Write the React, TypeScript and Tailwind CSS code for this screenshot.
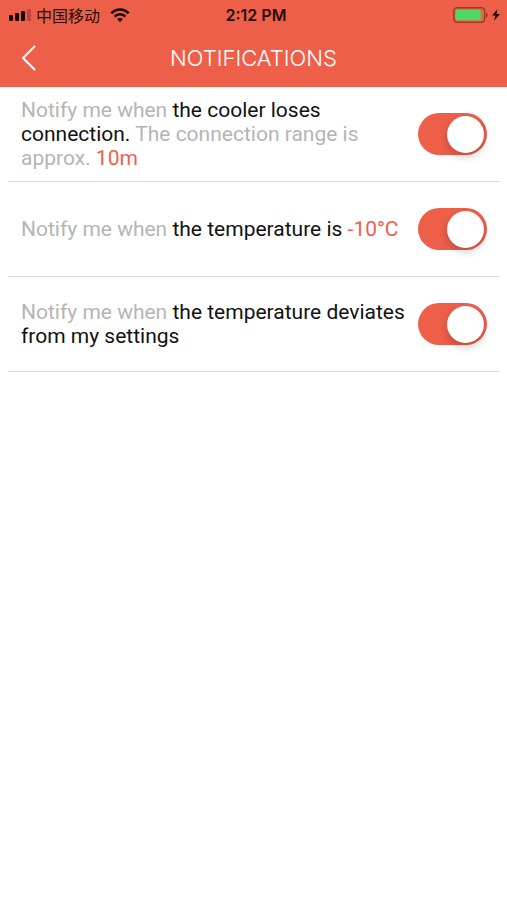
import { useState } from "react";
import type { ReactNode } from "react";

type Setting = {
  id: string;
  text: ReactNode;
};

const SETTINGS: Setting[] = [
  {
    id: "connection",
    text: (
      <>
        Notify me when <span className="text-[#111111]">the cooler loses connection.</span> The
        connection range is approx. <span className="text-[#f0604a]">10m</span>
      </>
    ),
  },
  {
    id: "temperature",
    text: (
      <>
        Notify me when <span className="text-[#111111]">the temperature is</span>{" "}
        <span className="text-[#f0604a]">-10°C</span>
      </>
    ),
  },
  {
    id: "deviation",
    text: (
      <>
        Notify me when{" "}
        <span className="text-[#111111]">the temperature deviates from my settings</span>
      </>
    ),
  },
];

function StatusBar() {
  return (
    <div className="grid h-[30px] grid-cols-3 items-center pl-2 pr-[7px] text-[#2a0c07]">
      <div className="flex items-center">
        {/* Signal */}
        <svg width="23" height="12" viewBox="0 0 23 12" className="shrink-0">
          <rect x="1" y="6" width="4" height="6" rx="1.3" fill="#170402" />
          <rect x="7" y="4" width="4" height="8" rx="1.3" fill="#170402" />
          <rect x="13" y="2" width="4" height="10" rx="1.3" fill="#170402" />
          <rect x="19" y="0" width="4" height="12" rx="1.3" fill="#b9483a" />
        </svg>
        <span className="ml-[5px] whitespace-nowrap font-['Noto_Sans_CJK_SC',sans-serif] text-[16px] leading-5">
          中国移动
        </span>
        {/* Wifi */}
        <svg width="20" height="14" viewBox="0 0 20 14" className="ml-2.5 shrink-0" fill="none" stroke="#170402">
          <path d="M1.3 5.3C6.2.2 13.8.2 18.7 5.3" strokeWidth="2.7" />
          <path d="M4.6 8.6c3.1-3.1 7.7-3.1 10.8 0" strokeWidth="2.5" />
          <path d="M7.1 11.1c1.7-1.5 4.1-1.5 5.8 0L10 14z" fill="#170402" stroke="none" />
        </svg>
      </div>
      <span className="pl-1 text-center text-[16px] font-semibold leading-5">2:12 PM</span>
      <div className="flex items-center justify-end">
        {/* Battery */}
        <svg width="36" height="16" viewBox="0 0 36 16" fill="none">
          <rect x="1.7" y="0.8" width="31" height="14.4" rx="3.5" stroke="#9b3b22" strokeWidth="1.5" />
          <rect x="3.7" y="2.8" width="25" height="10.4" rx="1.2" fill="#4cd964" />
          <path d="M34 5.4c2.4.8 2.4 4.4 0 5.2z" fill="#9b3b22" />
        </svg>
        <svg width="8" height="12" viewBox="0 0 9 13" className="ml-1" fill="#170402">
          <path d="M6.2 0 0 7.2h3.8L2.4 13 9 5.4H5.1z" />
        </svg>
      </div>
    </div>
  );
}

export default function App() {
  const [enabled, setEnabled] = useState<Record<string, boolean>>({
    connection: true,
    temperature: true,
    deviation: true,
  });

  return (
    <div className="min-h-screen bg-white font-['Inter',sans-serif]">
      <header className="bg-[#ee5f49]">
        <StatusBar />
        <div className="grid h-[57px] grid-cols-[44px_1fr_44px] items-center px-2 pb-0.5">
          <button aria-label="Back" className="flex h-11 items-center pl-[13px]">
            <svg width="15" height="26" viewBox="0 0 15 26" fill="none" stroke="#fff" strokeWidth="2">
              <path d="M14 1 2 13l12 12" />
            </svg>
          </button>
          <h1 className="text-center text-[22px] font-light leading-7 text-white">NOTIFICATIONS</h1>
        </div>
      </header>

      <main className="ml-2 mr-[7px]">
        {SETTINGS.map((s) => (
          <div
            key={s.id}
            className="flex min-h-[95px] items-center justify-between gap-2 border-b border-[#d9d9d9] px-[13px]"
          >
            <label
              htmlFor={s.id}
              className="flex-1 font-['Roboto',sans-serif] text-[21px] leading-6 text-[#b5b5b5]"
            >
              {s.text}
            </label>
            <input
              id={s.id}
              type="checkbox"
              checked={enabled[s.id]}
              onChange={(e) => setEnabled({ ...enabled, [s.id]: e.target.checked })}
              className="flex h-[42px] w-[69px] shrink-0 cursor-pointer appearance-none items-center rounded-full bg-[#d9d9d9] px-[3px] before:size-[37px] before:rounded-full before:bg-white before:shadow-[0_4px_8px_rgba(0,0,0,0.2)] checked:bg-[#ee5f49] checked:before:ml-auto"
            />
          </div>
        ))}
      </main>
    </div>
  );
}
